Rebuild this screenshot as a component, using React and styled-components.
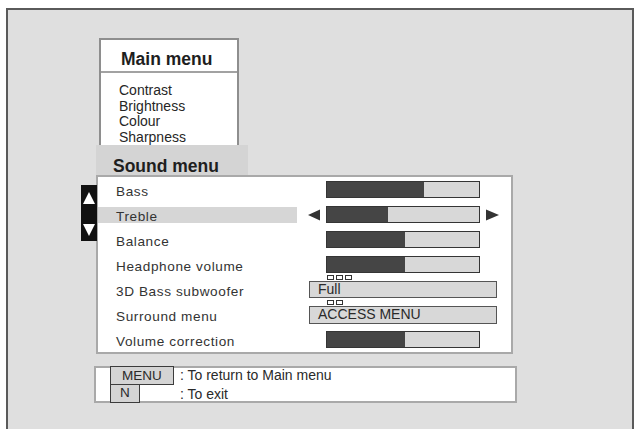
import styled, { createGlobalStyle } from 'styled-components';

const GlobalStyle = createGlobalStyle`
  html, body {
    margin: 0;
    background: #ffffff;
    overflow: hidden;
  }
  body {
    font-family: "Liberation Sans", Arial, sans-serif;
    color: #2a2a2a;
  }
`;

const Frame = styled.div`
  margin: 8px 0 0 6px;
  width: 628px;
  height: 440px;
  box-sizing: border-box;
  border: 2px solid #5a5a5a;
  border-bottom: none;
  background: #dfdfdf;
  padding: 28px 0 0 86px;
`;

const Stack = styled.div`
  display: flex;
  flex-direction: column;
  align-items: flex-start;
`;

const MainBox = styled.div`
  margin-left: 5px;
  width: 140px;
  box-sizing: border-box;
  border: 2px solid #8e8e8e;
  border-bottom: none;
  background: #ffffff;
`;

const MainTitle = styled.div`
  height: 33px;
  box-sizing: border-box;
  padding: 4px 0 0 20px;
  line-height: 30px;
  font-size: 17.5px;
  font-weight: bold;
  color: #1e1e1e;
  border-bottom: 2px solid #a2a2a2;
`;

const MainList = styled.div`
  padding: 10px 0 0 18px;
  font-size: 14px;
  line-height: 15.5px;
  color: #262626;
`;

const Tab = styled.div`
  margin-left: 2px;
  width: 152px;
  height: 30px;
  box-sizing: border-box;
  padding: 12px 0 0 17px;
  line-height: 18px;
  font-size: 17.5px;
  font-weight: bold;
  color: #1e1e1e;
  background: #d4d4d4;
`;

const Panel = styled.div`
  position: relative;
  margin-left: 2px;
  width: 417px;
  box-sizing: border-box;
  border: 2px solid #a9a9a9;
  background: #ffffff;
`;

const UpDown = styled.svg`
  position: absolute;
  left: -17px;
  top: 8px;
`;

const Row = styled.div`
  display: flex;
  align-items: center;
  height: 25px;
`;

const Label = styled.div`
  width: 199px;
  height: 16px;
  box-sizing: border-box;
  padding: 2px 0 0 18px;
  font-size: 13.6px;
  line-height: 16px;
  letter-spacing: 0.6px;
  color: #333333;
  background: ${p => (p.$active ? '#d6d6d6' : 'transparent')};
`;

const Control = styled.div`
  display: grid;
  grid-template-columns: 29px 154px 1fr;
  align-items: center;
  flex: 1;
`;

const Arrow = styled.svg`
  margin-left: ${p => p.$offset}px;
`;

const Bar = styled.div`
  grid-column: 2;
  display: flex;
  height: 17px;
  box-sizing: border-box;
  border: 1.5px solid #353535;
  background: #d8d8d8;
`;

const Fill = styled.div`
  background: #454545;
`;

const Select = styled.div`
  position: relative;
  grid-column: 1 / -1;
  margin-left: 12px;
  width: 188px;
  height: ${p => p.$h}px;
  box-sizing: border-box;
  border: 1.5px solid #555555;
  background: #d8d8d8;
  padding-left: 8px;
  font-size: 14px;
  line-height: ${p => p.$h - 3}px;
  color: #2a2a2a;
`;

const Dots = styled.div`
  position: absolute;
  left: 17px;
  top: -7px;
  display: flex;
  gap: 2px;
`;

const Dot = styled.span`
  width: 7px;
  height: 5px;
  box-sizing: border-box;
  border: 1.3px solid #333333;
  background: #ffffff;
`;

const Footer = styled.div`
  margin-top: 12px;
  width: 423px;
  height: 37px;
  box-sizing: border-box;
  border: 2px solid #a9a9a9;
  background: #ffffff;
  padding-left: 14px;
`;

const Keys = styled.div`
  margin-top: -2px;
  display: grid;
  grid-template-columns: 64px auto;
  column-gap: 6px;
  font-size: 14px;
  color: #2a2a2a;
`;

const Key = styled.div`
  justify-self: start;
  width: ${p => p.$w}px;
  height: ${p => p.$h}px;
  box-sizing: border-box;
  border: 1.5px solid #3c3c3c;
  border-top-width: ${p => (p.$first ? 1.5 : 0)}px;
  background: #d4d4d4;
  padding-left: ${p => p.$pad}px;
  font-size: 13.5px;
  line-height: ${p => p.$h - 2}px;
`;

const Hint = styled.div`
  line-height: ${p => p.$h}px;
`;

const bars = [
  { label: 'Bass', value: 64 },
  { label: 'Treble', value: 40, active: true },
  { label: 'Balance', value: 51 },
  { label: 'Headphone volume', value: 51 },
  { label: '3D Bass subwoofer', select: 'Full', dots: 3, h: 17 },
  { label: 'Surround menu', select: 'ACCESS MENU', dots: 2, h: 18 },
  { label: 'Volume correction', value: 51 },
];

const LeftArrow = () => (
  <Arrow $offset={11} width="12" height="12" viewBox="0 0 12 12">
    <polygon points="12,0.5 12,11.5 0,6" fill="#333" />
  </Arrow>
);

const RightArrow = () => (
  <Arrow $offset={6} width="13" height="12" viewBox="0 0 13 12">
    <polygon points="0,0.5 0,11.5 13,6" fill="#333" />
  </Arrow>
);

export default function App() {
  return (
    <>
      <GlobalStyle />
      <Frame>
        <Stack>
          <MainBox>
            <MainTitle>Main menu</MainTitle>
            <MainList>
              <div>Contrast</div>
              <div>Brightness</div>
              <div>Colour</div>
              <div>Sharpness</div>
            </MainList>
          </MainBox>
          <Tab>Sound menu</Tab>
          <Panel>
            <UpDown width="16" height="56" viewBox="0 0 16 56">
              <rect width="16" height="56" fill="#111" />
              <polygon points="8,7 14,19 2,19" fill="#fff" />
              <polygon points="2,39 14,39 8,51" fill="#fff" />
            </UpDown>
            {bars.map(b => (
              <Row key={b.label}>
                <Label $active={b.active}>{b.label}</Label>
                <Control>
                  {b.select ? (
                    <Select $h={b.h}>
                      <Dots>
                        {Array.from({ length: b.dots }).map((_, i) => (
                          <Dot key={i} />
                        ))}
                      </Dots>
                      {b.select}
                    </Select>
                  ) : (
                    <>
                      {b.active ? <LeftArrow /> : <span />}
                      <Bar>
                        <Fill style={{ width: `${b.value}%` }} />
                      </Bar>
                      {b.active ? <RightArrow /> : <span />}
                    </>
                  )}
                </Control>
              </Row>
            ))}
          </Panel>
          <Footer>
            <Keys>
              <Key $w={64} $h={19} $pad={11} $first>MENU</Key>
              <Hint $h={19}>: To return to Main menu</Hint>
              <Key $w={30} $h={18} $pad={9}>N</Key>
              <Hint $h={18}>: To exit</Hint>
            </Keys>
          </Footer>
        </Stack>
      </Frame>
    </>
  );
}
